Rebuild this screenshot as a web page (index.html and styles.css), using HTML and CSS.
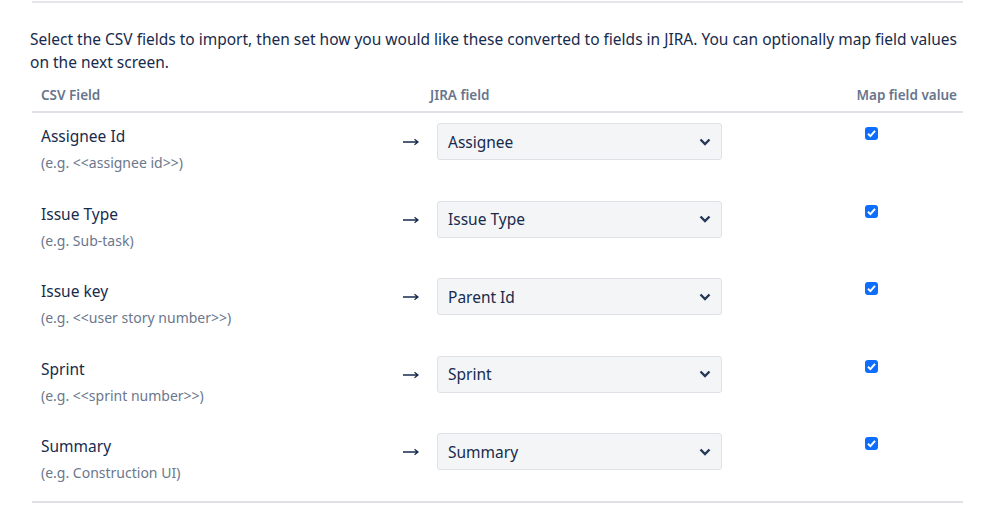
FILE: index.html
```html
<!DOCTYPE html>
<html>
<head>
<meta charset="utf-8">
<link rel="stylesheet" href="styles.css">
</head>
<body>
<div class="page">
  <div class="rule"></div>
  <p class="intro">Select the CSV fields to import, then set how you would like these converted to fields in JIRA. You can optionally map field values on the next screen.</p>
  <div class="table">
    <div class="grid head">
      <div class="th">CSV Field</div>
      <div></div>
      <div class="th">JIRA field</div>
      <div class="th th-map">Map field value</div>
    </div>

    <div class="grid row">
      <div class="csv"><div class="name">Assignee Id</div><div class="ex">(e.g. &lt;&lt;assignee id&gt;&gt;)</div></div>
      <div class="arrow"><svg width="16" height="8" viewBox="0 0 16 8"><path d="M0 4H15M11.5 1.2L15 4L11.5 6.8" fill="none" stroke="#172b4d" stroke-width="1.3"/></svg></div>
      <div class="sel-cell"><div class="select"><span>Assignee</span><svg width="12" height="8" viewBox="0 0 12 8"><path d="M1.5 1.5L6 6L10.5 1.5" fill="none" stroke="#253858" stroke-width="2.4"/></svg></div></div>
      <div class="map"><span class="check"><svg width="13" height="13" viewBox="0 0 13 13"><path d="M3 6.8L5.4 9.1L10 3.9" fill="none" stroke="#fff" stroke-width="2"/></svg></span></div>
    </div>

    <div class="grid row">
      <div class="csv"><div class="name">Issue Type</div><div class="ex">(e.g. Sub-task)</div></div>
      <div class="arrow"><svg width="16" height="8" viewBox="0 0 16 8"><path d="M0 4H15M11.5 1.2L15 4L11.5 6.8" fill="none" stroke="#172b4d" stroke-width="1.3"/></svg></div>
      <div class="sel-cell"><div class="select"><span>Issue Type</span><svg width="12" height="8" viewBox="0 0 12 8"><path d="M1.5 1.5L6 6L10.5 1.5" fill="none" stroke="#253858" stroke-width="2.4"/></svg></div></div>
      <div class="map"><span class="check"><svg width="13" height="13" viewBox="0 0 13 13"><path d="M3 6.8L5.4 9.1L10 3.9" fill="none" stroke="#fff" stroke-width="2"/></svg></span></div>
    </div>

    <div class="grid row">
      <div class="csv"><div class="name">Issue key</div><div class="ex">(e.g. &lt;&lt;user story number&gt;&gt;)</div></div>
      <div class="arrow"><svg width="16" height="8" viewBox="0 0 16 8"><path d="M0 4H15M11.5 1.2L15 4L11.5 6.8" fill="none" stroke="#172b4d" stroke-width="1.3"/></svg></div>
      <div class="sel-cell"><div class="select"><span>Parent Id</span><svg width="12" height="8" viewBox="0 0 12 8"><path d="M1.5 1.5L6 6L10.5 1.5" fill="none" stroke="#253858" stroke-width="2.4"/></svg></div></div>
      <div class="map"><span class="check"><svg width="13" height="13" viewBox="0 0 13 13"><path d="M3 6.8L5.4 9.1L10 3.9" fill="none" stroke="#fff" stroke-width="2"/></svg></span></div>
    </div>

    <div class="grid row">
      <div class="csv"><div class="name">Sprint</div><div class="ex">(e.g. &lt;&lt;sprint number&gt;&gt;)</div></div>
      <div class="arrow"><svg width="16" height="8" viewBox="0 0 16 8"><path d="M0 4H15M11.5 1.2L15 4L11.5 6.8" fill="none" stroke="#172b4d" stroke-width="1.3"/></svg></div>
      <div class="sel-cell"><div class="select"><span>Sprint</span><svg width="12" height="8" viewBox="0 0 12 8"><path d="M1.5 1.5L6 6L10.5 1.5" fill="none" stroke="#253858" stroke-width="2.4"/></svg></div></div>
      <div class="map"><span class="check"><svg width="13" height="13" viewBox="0 0 13 13"><path d="M3 6.8L5.4 9.1L10 3.9" fill="none" stroke="#fff" stroke-width="2"/></svg></span></div>
    </div>

    <div class="grid row">
      <div class="csv"><div class="name">Summary</div><div class="ex">(e.g. Construction UI)</div></div>
      <div class="arrow"><svg width="16" height="8" viewBox="0 0 16 8"><path d="M0 4H15M11.5 1.2L15 4L11.5 6.8" fill="none" stroke="#172b4d" stroke-width="1.3"/></svg></div>
      <div class="sel-cell"><div class="select"><span>Summary</span><svg width="12" height="8" viewBox="0 0 12 8"><path d="M1.5 1.5L6 6L10.5 1.5" fill="none" stroke="#253858" stroke-width="2.4"/></svg></div></div>
      <div class="map"><span class="check"><svg width="13" height="13" viewBox="0 0 13 13"><path d="M3 6.8L5.4 9.1L10 3.9" fill="none" stroke="#fff" stroke-width="2"/></svg></span></div>
    </div>
  </div>
</div>
</body>
</html>
```

FILE: styles.css
```css
html, body {
  margin: 0;
  padding: 0;
  background: #fff;
}
body {
  font-family: "Noto Sans", "Open Sans", sans-serif;
  color: #172b4d;
}
.page {
  margin-left: 30px;
  width: 933px;
  padding-top: 1px;
}
.rule {
  height: 2px;
  background: #e4e5ea;
  margin: 0 0 0 2px;
  width: 931px;
}
.intro {
  margin: 25px 0 0 0;
  font-size: 15.5px;
  line-height: 23px;
  color: #172b4d;
}
.table {
  margin-left: 2px;
  width: 931px;
  border-bottom: 2px solid #dfe1e6;
}
.grid {
  display: grid;
  grid-template-columns: 361px 37px 423px 110px;
}
.head {
  padding-top: 11px;
  height: 26px;
  border-bottom: 2px solid #dfe1e6;
  font-size: 13.5px;
  line-height: 21px;
  font-weight: 600;
  color: #67758d;
}
.head .th:first-child {
  padding-left: 9px;
}
.th-map {
  text-align: right;
  padding-right: 6px;
  white-space: nowrap;
}
.row {
  height: 77.5px;
  box-sizing: border-box;
  padding-top: 11px;
}
.csv {
  padding-left: 9px;
}
.name {
  font-size: 15.5px;
  line-height: 24px;
  color: #172b4d;
}
.ex {
  margin-top: 4px;
  font-size: 14px;
  line-height: 21px;
  color: #6b778c;
}
.arrow {
  padding-top: 14px;
  padding-left: 10px;
}
.arrow svg {
  display: block;
}
.sel-cell {
  padding-left: 7px;
}
.select {
  box-sizing: border-box;
  width: 285px;
  height: 37px;
  margin-top: -1px;
  background: #f4f5f7;
  border: 1px solid #dfe1e6;
  border-radius: 3px;
  display: flex;
  align-items: center;
  justify-content: space-between;
  padding: 0 10px 0 10px;
  font-size: 15.5px;
  color: #172b4d;
}
.map {
  padding-left: 12px;
  padding-top: 3px;
}
.check {
  display: block;
  width: 13px;
  height: 13px;
  border-radius: 3px;
  background: #0d6efd;
}
.check svg {
  display: block;
}
```
